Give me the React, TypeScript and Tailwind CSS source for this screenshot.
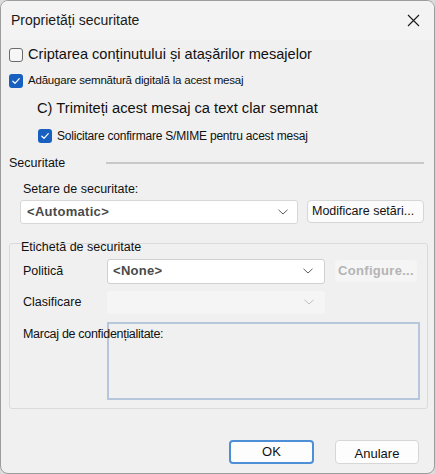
import React from "react";

const font = { fontFamily: '"Liberation Sans", Arial, sans-serif' };

function Check({ checked }: { checked?: boolean }) {
  if (checked) {
    return (
      <span className="flex h-[14px] w-[14px] shrink-0 items-center justify-center rounded-[3px] bg-[#1860c0]">
        <svg width="10" height="10" viewBox="0 0 10 10">
          <path d="M1.8 5.2 L4 7.3 L8.3 2.6" fill="none" stroke="#ffffff" strokeWidth="1.2" strokeLinecap="round" strokeLinejoin="round" />
        </svg>
      </span>
    );
  }
  return <span className="h-[14px] w-[14px] shrink-0 rounded-[3px] border border-[#6b6b6b] bg-[#f6f6f6]" />;
}

function Chevron({ color = "#606060" }: { color?: string }) {
  return (
    <svg width="12" height="8" viewBox="0 0 12 8">
      <path d="M1.5 1.8 L6 6 L10.5 1.8" fill="none" stroke={color} strokeWidth="1" />
    </svg>
  );
}

export default function App() {
  return (
    <div className="h-[474px] w-[435px] bg-[#dcdcdc]" style={font}>
      <div className="flex h-[474px] w-[435px] flex-col overflow-hidden rounded-[8px] border border-[#9c9c9c] bg-[#f0f0f0] text-[#1a1a1a]">
        {/* title bar */}
        <div className="flex h-[39px] shrink-0 items-center justify-between bg-[#f3f3f3] pl-[10px] pr-[14px]">
          <span className="text-[14px] text-[#1a1a1a]">Proprietăți securitate</span>
          <svg width="13" height="13" viewBox="0 0 13 13">
            <path d="M1 1 L12 12 M12 1 L1 12" stroke="#1a1a1a" strokeWidth="1.1" />
          </svg>
        </div>

        {/* body */}
        <div className="flex flex-col pl-[8px] pr-[8px]">
          <div className="mt-[7px] flex h-[16px] items-center gap-[5px]">
            <Check />
            <span className="text-[14.6px] text-[#111]">Criptarea conținutului și atașărilor mesajelor</span>
          </div>
          <div className="mt-[10px] flex h-[16px] items-center gap-[5px]">
            <Check checked />
            <span className="text-[11.5px] tracking-[-0.2px] text-[#111]">Adăugare semnătură digitală la acest mesaj</span>
          </div>
          <div className="ml-[28px] mt-[11px] flex h-[16px] items-center">
            <span className="text-[14.7px] text-[#111]">C) Trimiteți acest mesaj ca text clar semnat</span>
          </div>
          <div className="ml-[29px] mt-[12px] flex h-[16px] items-center gap-[5px]">
            <Check checked />
            <span className="text-[12px] tracking-[-0.2px] text-[#111]">Solicitare confirmare S/MIME pentru acest mesaj</span>
          </div>

          {/* Securitate section */}
          <div className="mt-[11px] flex h-[16px] items-center">
            <span className="w-[97px] text-[12.5px] text-[#111]">Securitate</span>
            <div className="h-[2px] w-[318px] bg-[#c8c8c8]" />
          </div>
          <div className="ml-[14px] mt-[9px] text-[12.5px] text-[#111]">Setare de securitate:</div>
          <div className="ml-[11px] mt-[1px] flex items-center gap-[9px]">
            <div className="flex h-[24px] w-[278px] items-center justify-between rounded-[3px] border border-[#d8d8d8] bg-white pl-[6px] pr-[8px]">
              <span className="text-[13px] font-bold tracking-[0.3px] text-[#4a4a4a]">&lt;Automatic&gt;</span>
              <Chevron />
            </div>
            <div className="flex h-[23px] w-[117px] items-center rounded-[4px] border border-[#d6d6d6] bg-[#fbfbfb] pl-[4px] text-[12.5px] text-[#111]">
              Modificare setări...
            </div>
          </div>

          {/* group box */}
          <div className="mt-[19px] h-[166px] w-[419px] rounded-[3px] border border-[#dadada]">
            <div className="-mt-[6px] ml-[11px] text-[12.5px] text-[#111]">Etichetă de securitate</div>
            <div className="mt-[2px] flex items-center">
              <span className="ml-[13px] w-[84px] text-[12.5px] text-[#111]">Politică</span>
              <div className="flex h-[25px] w-[218px] items-center justify-between rounded-[3px] border border-[#d0d0d0] bg-white pl-[5px] pr-[10px]">
                <span className="text-[13px] font-bold tracking-[0.3px] text-[#4a4a4a]">&lt;None&gt;</span>
                <Chevron />
              </div>
              <div className="ml-[10px] flex h-[22px] w-[82px] items-center justify-center rounded-[4px] bg-[#f5f5f5] text-[13px] font-bold tracking-[0.3px] text-[#b4b4b4]">
                Configure...
              </div>
            </div>
            <div className="mt-[7px] flex items-center">
              <span className="ml-[13px] w-[84px] text-[12.5px] text-[#111]">Clasificare</span>
              <div className="flex h-[23px] w-[218px] items-center justify-end rounded-[3px] bg-[#f5f5f5] pr-[10px]">
                <Chevron color="#c0c0c0" />
              </div>
            </div>
            <div className="mt-[8px] flex items-start">
              <span className="relative z-10 ml-[13px] mt-[3px] w-[84px] whitespace-nowrap text-[12.5px] tracking-[-0.3px] text-[#111]">
                Marcaj de confidențialitate:
              </span>
              <div className="h-[78px] w-[313px] border-2 border-[#b6c6db] bg-[#f0f0f0]" />
            </div>
          </div>

          {/* buttons */}
          <div className="mt-[31px] flex justify-end gap-[21px] pr-[7px]">
            <div className="flex h-[24px] w-[85px] items-center justify-center rounded-[4px] border-2 border-[#4c8fd6] bg-[#fdfdfd] text-[13px] text-[#111]">
              OK
            </div>
            <div className="flex h-[24px] w-[84px] items-center justify-center rounded-[4px] border border-[#d6d6d6] bg-[#fdfdfd] pt-[3px] text-[13px] text-[#111]">
              Anulare
            </div>
          </div>
        </div>
      </div>
    </div>
  );
}
